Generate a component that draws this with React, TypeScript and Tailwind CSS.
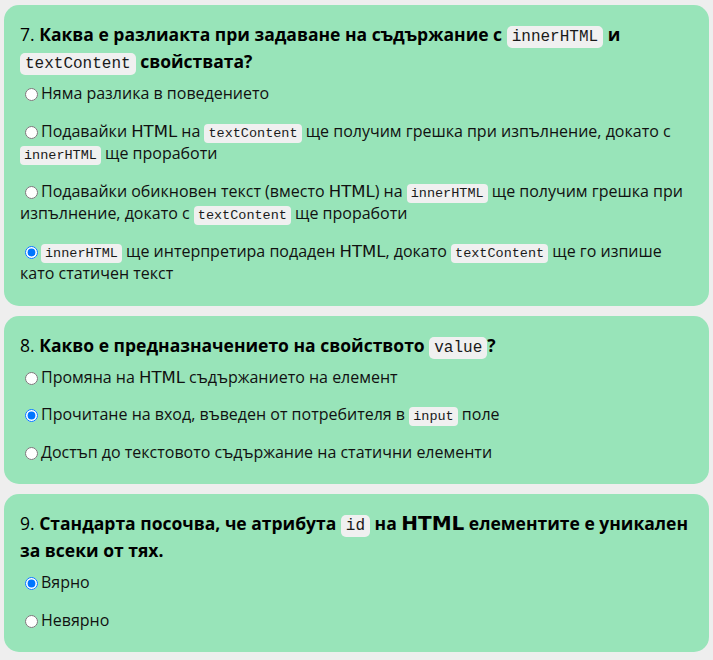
import React from "react";

const body = '"Open Sans", "Noto Sans", sans-serif';

function Code({ children, big }: { children: React.ReactNode; big?: boolean }) {
  return (
    <code
      className={
        big
          ? "rounded-[5px] bg-[#f0f0f0] px-[5px] py-[2px] font-normal text-[16px] leading-none text-[#1a1a1a] font-['Liberation_Mono',monospace]"
          : "rounded-[4px] bg-[#f0f0f0] px-[4px] py-[2px] text-[13.5px] leading-none text-[#1a1a1a] font-['Liberation_Mono',monospace]"
      }
    >
      {children}
    </code>
  );
}

function Html({ big }: { big?: boolean }) {
  return big ? (
    <span className="font-['DejaVu_Sans',sans-serif] text-[20px] leading-none font-bold">HTML</span>
  ) : (
    <span className="font-['DejaVu_Sans',sans-serif] text-[16.5px] leading-none">HTML</span>
  );
}

function Option({ checked, children }: { checked?: boolean; children: React.ReactNode }) {
  return (
    <div className="text-[16px] leading-[22.5px] text-[#111]">
      <input
        type="radio"
        readOnly
        checked={!!checked}
        className="ml-[5px] mr-[3px] h-[13px] w-[13px] align-[-2px]"
      />
      {children}
    </div>
  );
}

function Card({ num, title, children }: { num: number; title: React.ReactNode; children: React.ReactNode }) {
  return (
    <div className="rounded-[15px] bg-[#98e4b9] px-[16px] pt-[16px] pb-[21px]">
      <h3 className="text-[17.5px] leading-[27px] font-bold text-black">
        <span className="font-normal">{num}.</span> {title}
      </h3>
      <div className="mt-[7px] flex flex-col gap-[15px]">{children}</div>
    </div>
  );
}

export default function App() {
  return (
    <div className="min-h-screen bg-[#eeeeee] px-[4px] pt-[5px] pb-[6px] flex flex-col gap-[10px]" style={{ fontFamily: body }}>
      <Card
        num={7}
        title={
          <>
            Каква е разлиакта при задаване на съдържание с <Code big>innerHTML</Code> и <Code big>textContent</Code> свойствата?
          </>
        }
      >
        <Option>Няма разлика в поведението</Option>
        <Option>
          Подавайки <Html /> на <Code>textContent</Code> ще получим грешка при изпълнение, докато с <Code>innerHTML</Code> ще проработи
        </Option>
        <Option>
          Подавайки обикновен текст (вместо <Html />) на <Code>innerHTML</Code> ще получим грешка при изпълнение, докато с <Code>textContent</Code> ще проработи
        </Option>
        <Option checked>
          <Code>innerHTML</Code> ще интерпретира подаден <Html />, докато <Code>textContent</Code> ще го изпише като статичен текст
        </Option>
      </Card>

      <Card
        num={8}
        title={
          <>
            Какво е предназначението на свойството <Code big>value</Code>?
          </>
        }
      >
        <Option>
          Промяна на <Html /> съдържанието на елемент
        </Option>
        <Option checked>
          Прочитане на вход, въведен от потребителя в <Code>input</Code> поле
        </Option>
        <Option>Достъп до текстовото съдържание на статични елементи</Option>
      </Card>

      <Card
        num={9}
        title={
          <>
            Стандарта посочва, че атрибута <Code big>id</Code> на <Html big /> елементите е уникален за всеки от тях.
          </>
        }
      >
        <Option checked>Вярно</Option>
        <Option>Невярно</Option>
      </Card>
    </div>
  );
}
